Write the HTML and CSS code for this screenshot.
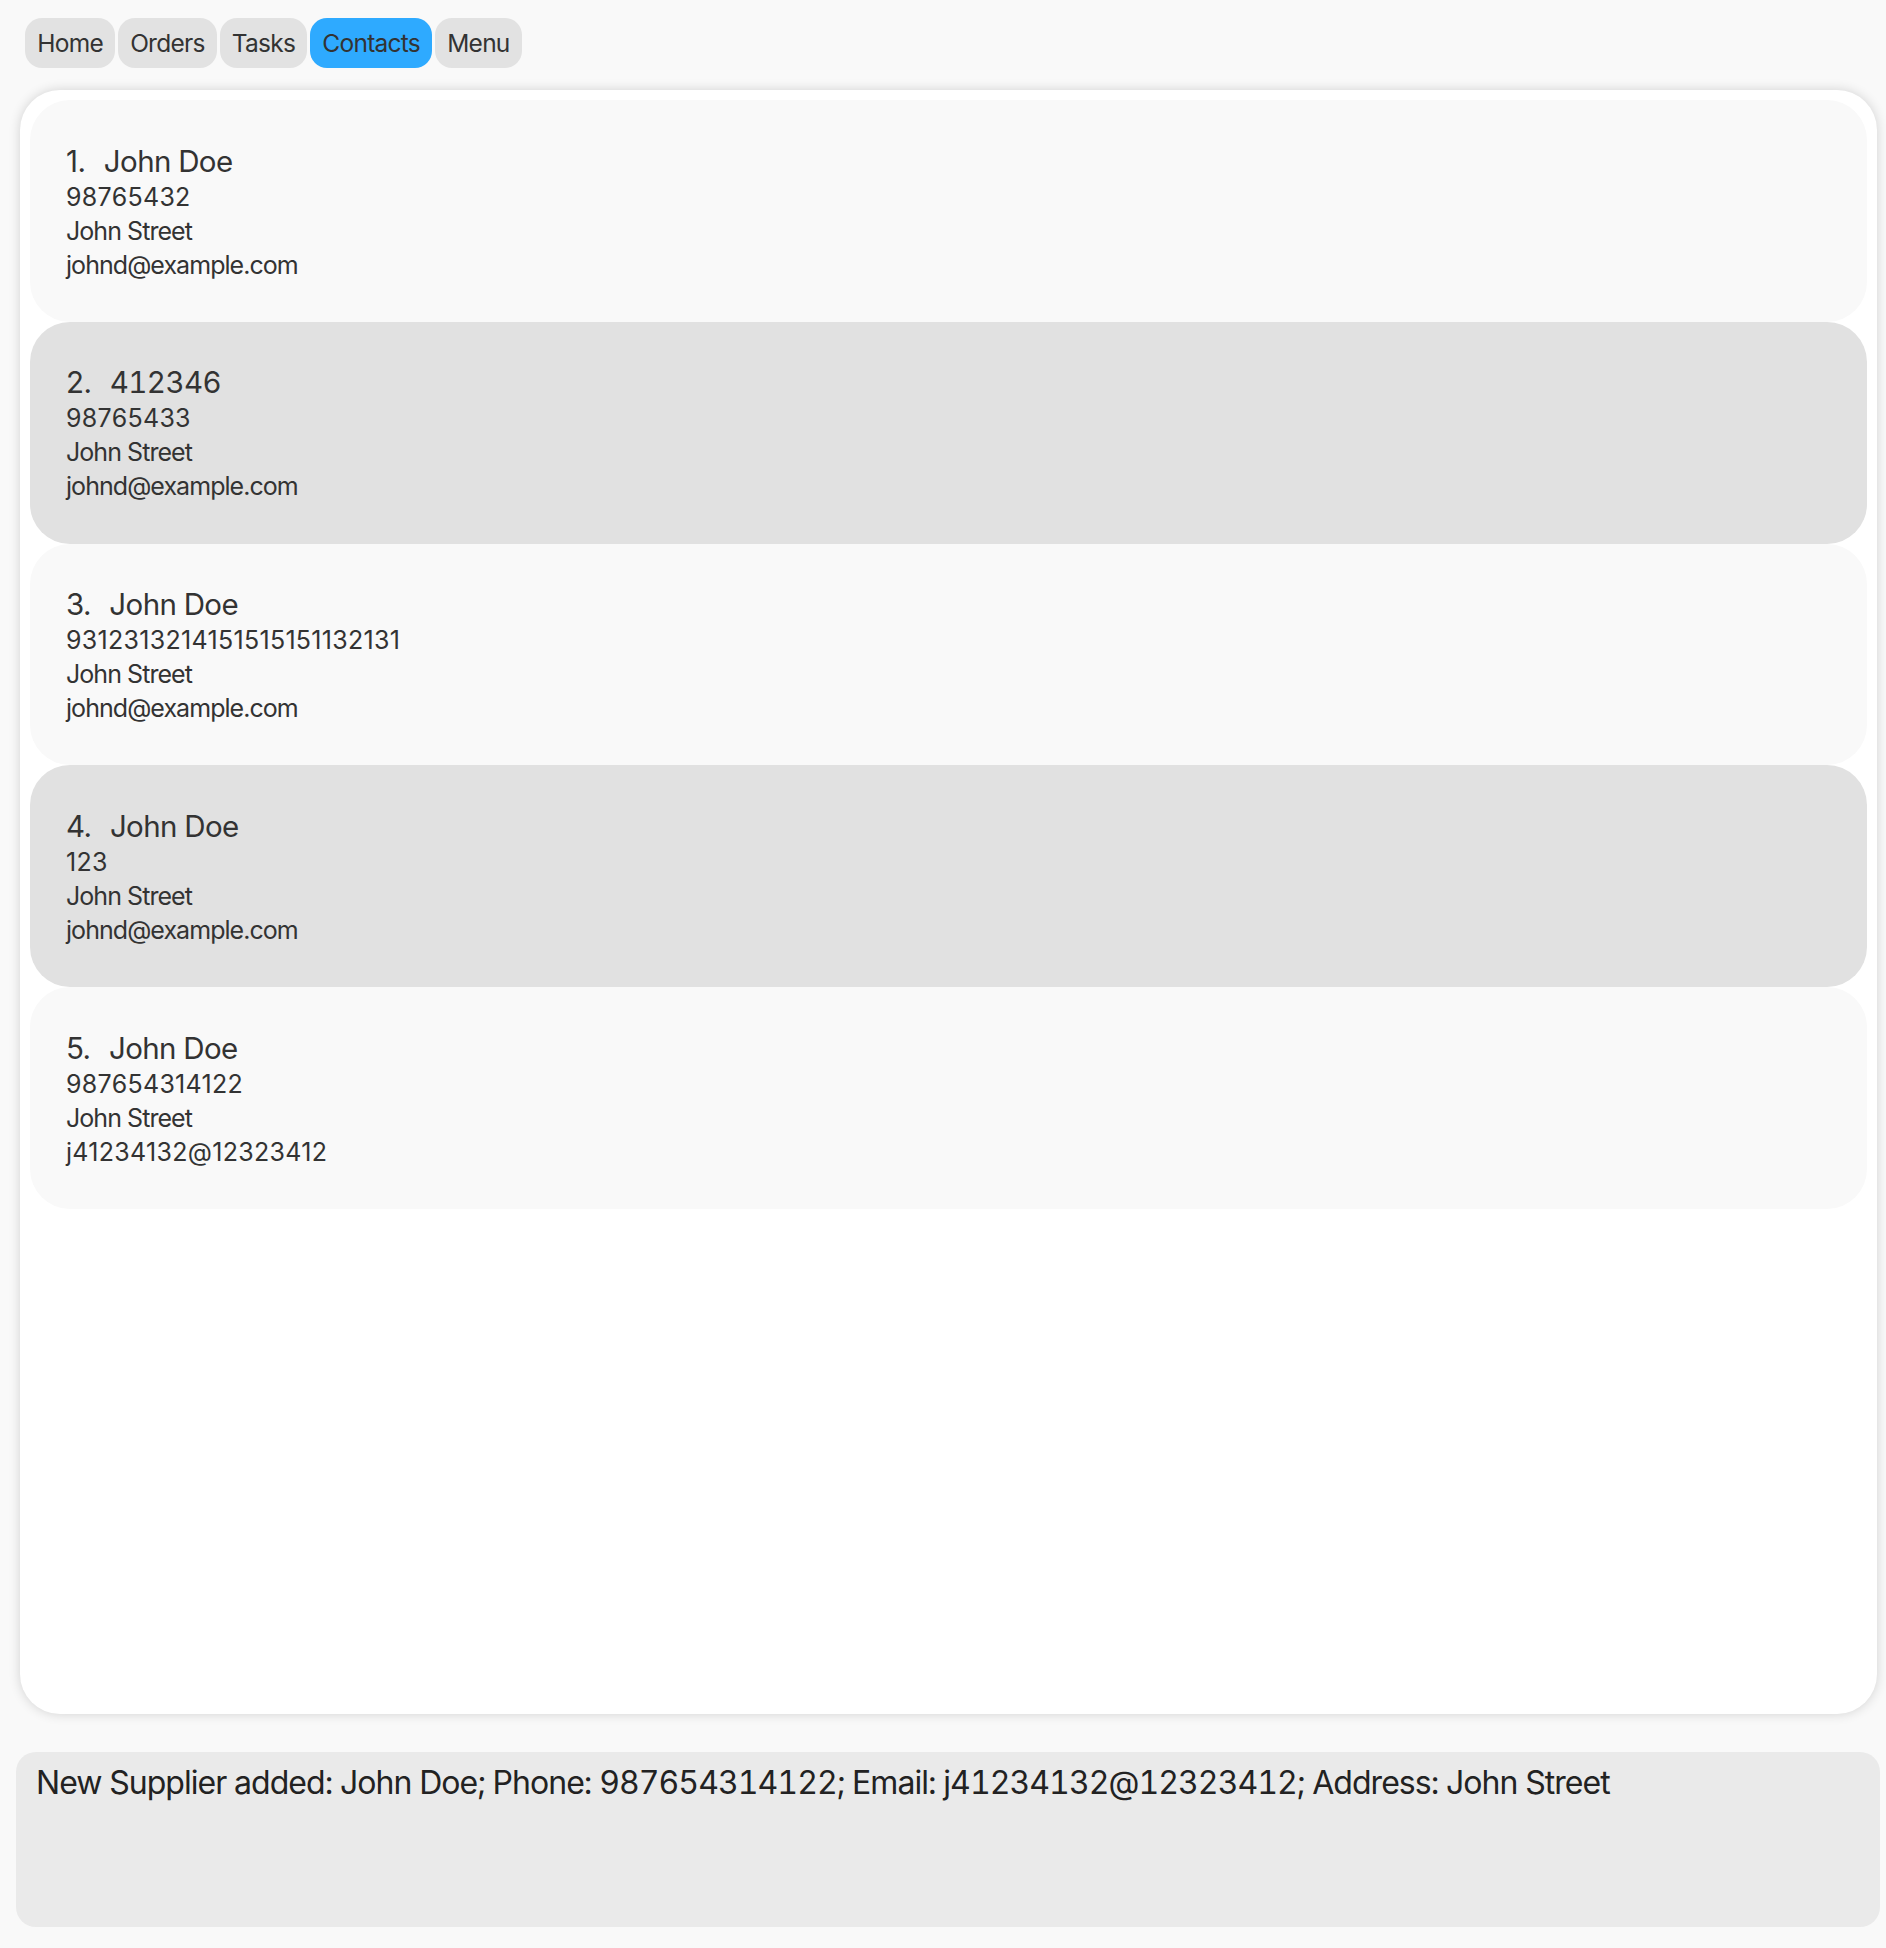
FILE: index.html
```html
<!DOCTYPE html>
<html lang="en">
<head>
<meta charset="utf-8">
<title>Contacts</title>
<link rel="stylesheet" href="styles.css">
</head>
<body>
<div class="app">
  <nav class="tabs">
    <div class="tab">Home</div>
    <div class="tab">Orders</div>
    <div class="tab">Tasks</div>
    <div class="tab active">Contacts</div>
    <div class="tab">Menu</div>
  </nav>
  <main class="panel">
    <div class="card odd">
      <div class="title"><span class="idx">1.</span>John Doe</div>
      <div class="line num">98765432</div>
      <div class="line">John Street</div>
      <div class="line">johnd@example.com</div>
    </div>
    <div class="card even">
      <div class="title"><span class="idx">2.</span>412346</div>
      <div class="line num">98765433</div>
      <div class="line">John Street</div>
      <div class="line">johnd@example.com</div>
    </div>
    <div class="card odd">
      <div class="title"><span class="idx">3.</span>John Doe</div>
      <div class="line num">9312313214151515151132131</div>
      <div class="line">John Street</div>
      <div class="line">johnd@example.com</div>
    </div>
    <div class="card even">
      <div class="title"><span class="idx">4.</span>John Doe</div>
      <div class="line num">123</div>
      <div class="line">John Street</div>
      <div class="line">johnd@example.com</div>
    </div>
    <div class="card odd">
      <div class="title"><span class="idx">5.</span>John Doe</div>
      <div class="line num">987654314122</div>
      <div class="line">John Street</div>
      <div class="line num">j41234132@12323412</div>
    </div>
  </main>
  <section class="result">New Supplier added: John Doe; Phone: 987654314122; Email: j41234132@12323412; Address: John Street</section>
</div>
</body>
</html>
```

FILE: styles.css
```css
* { box-sizing: border-box; }
html, body {
  margin: 0;
  padding: 0;
  background: #f9f9f9;
}
body {
  font-family: Inter, "Noto Sans", sans-serif;
  color: #333333;
}
.app {
  width: 1886px;
  height: 1948px;
  display: flex;
  flex-direction: column;
  padding: 18px 0 0 0;
}
.tabs {
  display: flex;
  gap: 2.6px;
  margin-left: 25px;
  height: 50px;
}
.tab {
  height: 50px;
  line-height: 50px;
  padding: 0 12.3px;
  border-radius: 17px;
  background: #e2e2e2;
  font-size: 24.5px;
  letter-spacing: -0.75px;
  color: #333;
}
.tab.active {
  background: #2eaaff;
}
.panel {
  margin: 22px 0 0 20px;
  width: 1857px;
  height: 1624px;
  background: #ffffff;
  border-radius: 40px;
  box-shadow: 0 0 12px rgba(0, 0, 0, 0.16);
  padding: 10px;
  display: flex;
  flex-direction: column;
}
.card {
  height: 221.8px;
  border-radius: 40px;
  padding: 42.6px 0 0 36px;
  flex: none;
}
.card.odd { background: #f9f9f9; }
.card.even { background: #e1e1e1; }
.title {
  font-size: 29.5px;
  line-height: 37px;
  letter-spacing: -0.6px;
  font-variant-numeric: tabular-nums;
  color: #333;
}
.idx {
  font-variant-numeric: proportional-nums;
  margin-right: 18.5px;
}
.line {
  font-size: 25px;
  line-height: 34px;
  letter-spacing: -0.95px;
  color: #333;
}
.line.num {
  letter-spacing: 0.3px;
}
.result {
  margin: 38px 0 0 16px;
  width: 1864px;
  height: 175px;
  background: #eaeaea;
  border-radius: 20px;
  padding: 10.5px 20px;
  font-size: 32px;
  line-height: 40px;
  letter-spacing: -0.95px;
  font-variant-numeric: tabular-nums;
  color: #222;
}
```
